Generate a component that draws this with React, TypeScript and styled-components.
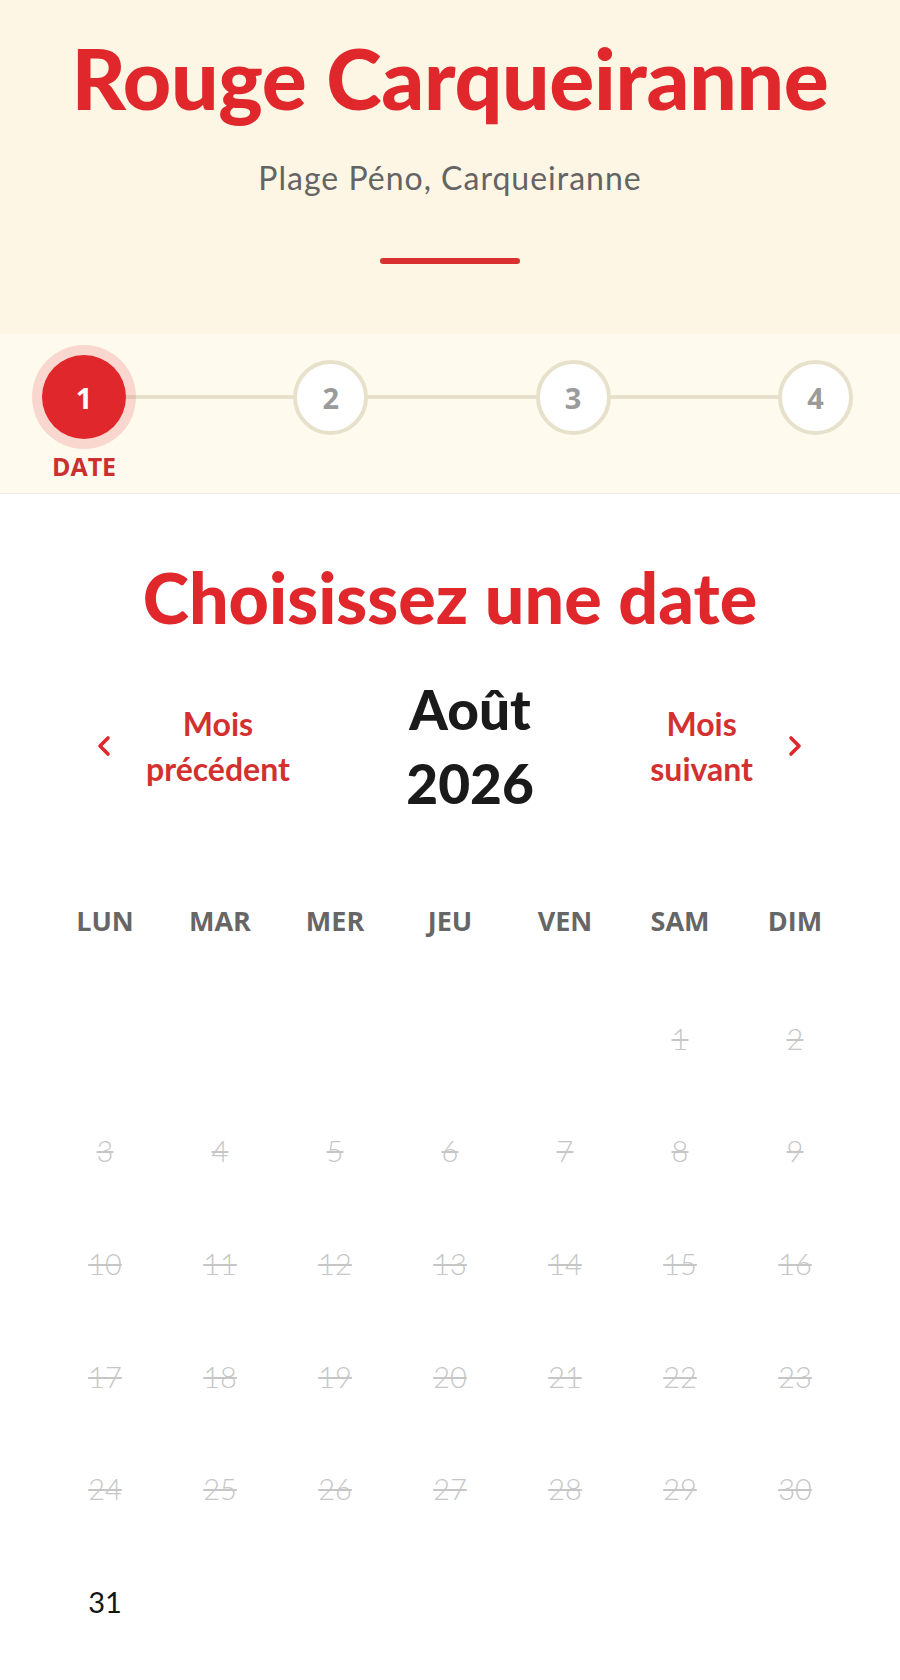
import React from "react";
import styled, { createGlobalStyle } from "styled-components";

const GlobalStyle = createGlobalStyle`
  body {
    margin: 0;
    background: #ffffff;
    font-family: "Lato", "Liberation Sans", sans-serif;
  }
`;

const RED = "#e0282c";

const steps = [
  { n: 1, label: "DATE" },
  { n: 2 },
  { n: 3 },
  { n: 4 },
];

const weekdays = ["LUN", "MAR", "MER", "JEU", "VEN", "SAM", "DIM"];

// août 2026 commence un samedi
const OFFSET = 5;
const DAYS = 31;
const available = [31];

function Chevron({ dir }: { dir: "left" | "right" }) {
  return (
    <svg width="16" height="24" viewBox="0 0 16 24" fill="none">
      <path
        d={dir === "left" ? "M12 4 L4 12 L12 20" : "M4 4 L12 12 L4 20"}
        stroke={RED}
        strokeWidth="3.6"
        strokeLinecap="round"
        strokeLinejoin="round"
      />
    </svg>
  );
}

export default function App() {
  const cells: (number | null)[] = [];
  for (let i = 0; i < OFFSET; i++) cells.push(null);
  for (let d = 1; d <= DAYS; d++) cells.push(d);

  return (
    <Page>
      <GlobalStyle />
      <Header>
        <Title>Rouge Carqueiranne</Title>
        <Subtitle>Plage Péno, Carqueiranne</Subtitle>
        <Divider />
      </Header>

      <Stepper>
        <StepTrack>
          {steps.map((s) => (
            <StepItem key={s.n}>
              <CircleSlot>
                <StepCircle $active={s.n === 1}>{s.n}</StepCircle>
              </CircleSlot>
              {s.label && <StepLabel>{s.label}</StepLabel>}
            </StepItem>
          ))}
        </StepTrack>
      </Stepper>

      <Content>
        <SectionTitle>Choisissez une date</SectionTitle>

        <MonthNav>
          <NavButton>
            <Chevron dir="left" />
            <NavText>
              Mois
              <br />
              précédent
            </NavText>
          </NavButton>
          <MonthTitle>
            Août
            <br />
            2026
          </MonthTitle>
          <NavButton>
            <NavText>
              Mois
              <br />
              suivant
            </NavText>
            <Chevron dir="right" />
          </NavButton>
        </MonthNav>

        <WeekRow>
          {weekdays.map((w) => (
            <Weekday key={w}>{w}</Weekday>
          ))}
        </WeekRow>

        <DaysGrid>
          {cells.map((d, i) => (
            <DayCell key={i}>
              {d && (
                <DayNumber $disabled={!available.includes(d)}>{d}</DayNumber>
              )}
            </DayCell>
          ))}
        </DaysGrid>
      </Content>
    </Page>
  );
}

const Page = styled.div`
  width: 900px;
  min-height: 1680px;
  background: #ffffff;
`;

const Header = styled.header`
  background: #fdf6e5;
  height: 334px;
  box-sizing: border-box;
  padding-top: 36px;
  display: flex;
  flex-direction: column;
  align-items: center;
`;

const Title = styled.h1`
  margin: 0;
  font-family: "Lato", sans-serif;
  font-weight: 900;
  font-size: 84px;
  line-height: 84px;
  letter-spacing: -0.3px;
  color: ${RED};
`;

const Subtitle = styled.p`
  margin: 38px 0 0;
  font-family: "Lato", sans-serif;
  font-weight: 400;
  font-size: 32px;
  line-height: 40px;
  letter-spacing: 1px;
  color: #646464;
`;

const Divider = styled.div`
  margin-top: 60px;
  width: 140px;
  height: 6px;
  border-radius: 3px;
  background: #d9312f;
`;

const Stepper = styled.section`
  background: #fefaee;
  border-bottom: 1px solid #eeeae0;
  padding: 21px 0 13px;
`;

const StepTrack = styled.div`
  position: relative;
  display: flex;
  justify-content: space-between;
  align-items: flex-start;
  padding: 0 47px 0 42px;

  &::before {
    content: "";
    position: absolute;
    left: 84px;
    right: 85px;
    top: 40px;
    height: 4px;
    background: #e7e1cc;
  }
`;

const StepItem = styled.div`
  position: relative;
  display: flex;
  flex-direction: column;
  align-items: center;
`;

const CircleSlot = styled.div`
  height: 84px;
  display: flex;
  align-items: center;
  justify-content: center;
`;

const StepCircle = styled.div<{ $active?: boolean }>`
  box-sizing: border-box;
  width: ${(p) => (p.$active ? "84px" : "75px")};
  height: ${(p) => (p.$active ? "84px" : "75px")};
  border-radius: 50%;
  display: flex;
  align-items: center;
  justify-content: center;
  font-family: "Open Sans", sans-serif;
  font-weight: 700;
  font-size: 29px;
  background: ${(p) => (p.$active ? RED : "#ffffff")};
  color: ${(p) => (p.$active ? "#ffffff" : "#9b9b9b")};
  border: ${(p) => (p.$active ? "none" : "4px solid #e7e1cc")};
  box-shadow: ${(p) =>
    p.$active ? "0 0 0 10px rgba(224, 40, 44, 0.16)" : "none"};
`;

const StepLabel = styled.div`
  margin-top: 13px;
  font-family: "Open Sans", sans-serif;
  font-weight: 700;
  font-size: 25px;
  line-height: 28px;
  color: #c9302f;
`;

const Content = styled.main`
  padding: 63px 0 40px;
`;

const SectionTitle = styled.h2`
  margin: 0;
  text-align: center;
  font-family: "Lato", sans-serif;
  font-weight: 900;
  font-size: 70px;
  line-height: 80px;
  color: ${RED};
`;

const MonthNav = styled.div`
  margin-top: 35px;
  display: flex;
  align-items: center;
  justify-content: space-between;
  padding: 0 97px 0 96px;
`;

const NavButton = styled.button`
  display: flex;
  align-items: center;
  gap: 34px;
  padding: 0;
  border: none;
  background: none;
  cursor: pointer;
`;

const NavText = styled.span`
  font-family: "Lato", sans-serif;
  font-weight: 700;
  font-size: 32px;
  line-height: 45px;
  color: #d3302f;
  text-align: center;
`;

const MonthTitle = styled.div`
  font-family: "Lato", sans-serif;
  font-weight: 900;
  font-size: 55px;
  line-height: 74px;
  color: #1a1a1a;
  text-align: center;
`;

const WeekRow = styled.div`
  margin: 81px auto 0;
  width: 805px;
  display: grid;
  grid-template-columns: repeat(7, 1fr);
`;

const Weekday = styled.div`
  height: 40px;
  line-height: 40px;
  text-align: center;
  font-family: "Open Sans", sans-serif;
  font-weight: 700;
  font-size: 27px;
  color: #666666;
`;

const DaysGrid = styled.div`
  margin: 41px auto 0;
  width: 805px;
  display: grid;
  grid-template-columns: repeat(7, 1fr);
  grid-auto-rows: 112.6px;
`;

const DayCell = styled.div`
  display: flex;
  align-items: center;
  justify-content: center;
`;

const DayNumber = styled.span<{ $disabled?: boolean }>`
  font-family: "Lato", sans-serif;
  font-size: 29px;
  font-weight: ${(p) => (p.$disabled ? 300 : 400)};
  color: ${(p) => (p.$disabled ? "#c6c6c6" : "#151515")};
  text-decoration: ${(p) => (p.$disabled ? "line-through" : "none")};
  text-decoration-thickness: 2px;
`;
